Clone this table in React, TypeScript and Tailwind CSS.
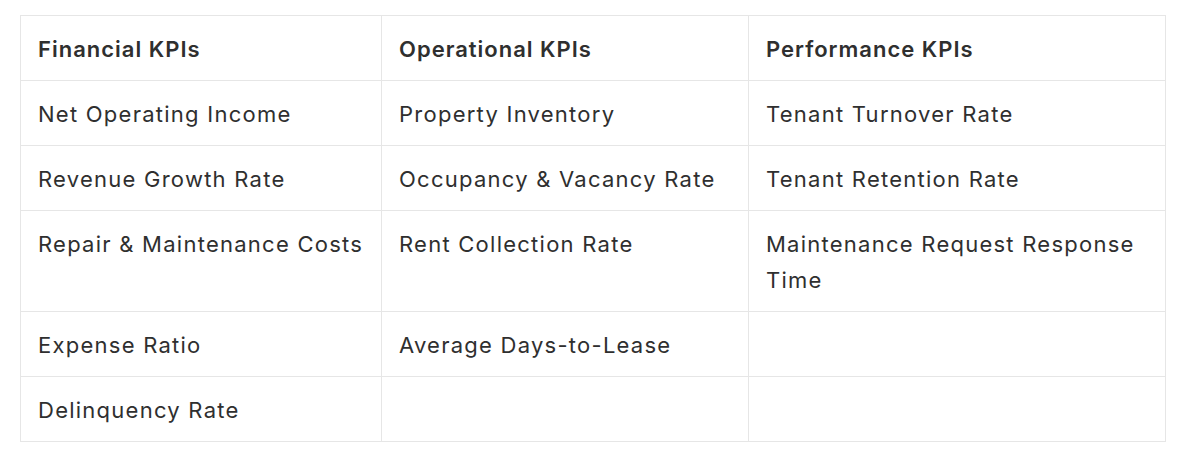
const headers = ["Financial KPIs", "Operational KPIs", "Performance KPIs"];

const rows: string[][] = [
  ["Net Operating Income", "Property Inventory", "Tenant Turnover Rate"],
  ["Revenue Growth Rate", "Occupancy & Vacancy Rate", "Tenant Retention Rate"],
  ["Repair & Maintenance Costs", "Rent Collection Rate", "Maintenance Request Response Time"],
  ["Expense Ratio", "Average Days-to-Lease", ""],
  ["Delinquency Rate", "", ""],
];

export default function App() {
  return (
    <div
      className="bg-white pt-[15px] pl-[20px] min-h-[460px]"
      style={{ fontFamily: 'Inter, "Noto Sans", sans-serif' }}
    >
      <table className="border-collapse table-fixed w-[1145px] text-[22px] leading-[36px] text-[#2f2f2f]">
        <colgroup>
          <col className="w-[361px]" />
          <col className="w-[367px]" />
          <col className="w-[417px]" />
        </colgroup>
        <thead>
          <tr>
            {headers.map((h) => (
              <th
                key={h}
                className="border border-[#e6e6e6] px-[17px] pt-[15px] pb-[13px] text-left font-semibold tracking-[1px] align-top"
              >
                {h}
              </th>
            ))}
          </tr>
        </thead>
        <tbody>
          {rows.map((row, i) => (
            <tr key={i}>
              {row.map((cell, j) => (
                <td
                  key={j}
                  className="border border-[#e6e6e6] px-[17px] pt-[15px] pb-[13px] tracking-[1.25px] align-top"
                >
                  {cell}
                </td>
              ))}
            </tr>
          ))}
        </tbody>
      </table>
    </div>
  );
}
